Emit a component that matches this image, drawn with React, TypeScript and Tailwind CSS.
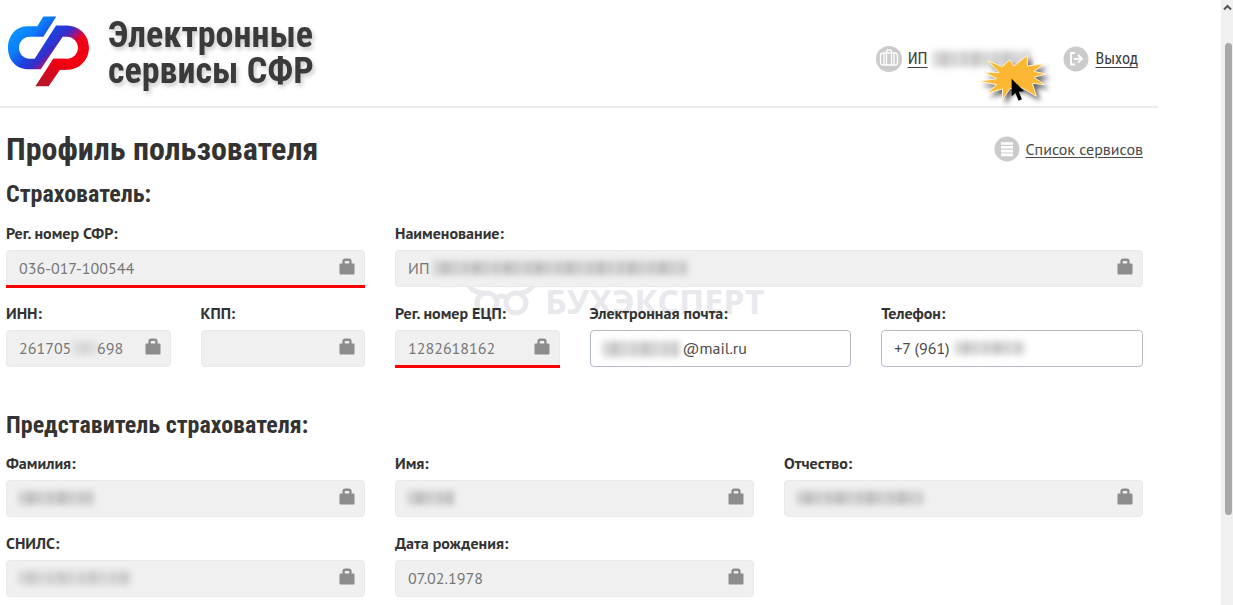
import { useId } from "react";
import type { ReactNode } from "react";

const Logo = () => (
  <svg viewBox="24 50 243 212" className="mb-[3px] h-[71px] w-[81px]" aria-hidden="true">
    <defs>
      <linearGradient id="logoMain" gradientUnits="userSpaceOnUse" x1="65" y1="65" x2="225" y2="225">
        <stop offset="0" stopColor="#0a96ff" />
        <stop offset="0.22" stopColor="#0d7cfa" />
        <stop offset="0.4" stopColor="#1c42df" />
        <stop offset="0.54" stopColor="#3a2cc8" />
        <stop offset="0.63" stopColor="#a8127c" />
        <stop offset="0.72" stopColor="#f20018" />
        <stop offset="1" stopColor="#f4000c" />
      </linearGradient>
      <linearGradient id="logoTail" gradientUnits="userSpaceOnUse" x1="170" y1="185" x2="125" y2="260">
        <stop offset="0" stopColor="#f00010" />
        <stop offset="1" stopColor="#b5162a" />
      </linearGradient>
    </defs>
    <path
      fill="url(#logoMain)"
      d="M130 51H169L130 112H90C46 114 46 176 90 178H104L168 78H200C289 82 289 207 200 211H140L160 178H200C245 176 245 114 200 112H188L122 209H80C5 205 5 84 80 80H112Z"
    />
    <path fill="url(#logoTail)" d="M160 178H200V211H180L146 260H106Z" />
  </svg>
);

const LockIcon = () => (
  <svg viewBox="0 0 16 17" className="h-[17px] w-4 shrink-0" aria-hidden="true">
    <path d="M4.600 6V3.200C4.600 2.200 5.200 1.700 6.200 1.700H9.800C10.800 1.700 11.400 2.200 11.400 3.200V6" fill="none" stroke="#8c8c8c" strokeWidth="2.400" />
    <rect x="0.500" y="5.500" width="15" height="11" rx="1" fill="#8c8c8c" />
  </svg>
);

const SuitcaseIcon = () => (
  <svg viewBox="0 0 26 26" className="size-[26px] shrink-0" aria-hidden="true">
    <circle cx="13" cy="13" r="13" fill="#cbcbcb" />
    <g fill="none" stroke="#fff" strokeWidth="1.3">
      <rect x="4.500" y="7" width="17" height="12" rx="2.500" />
      <path d="M8 7V19M18 7V19M10.500 19V5.500Q10.500 4 12 4H14Q15.500 4 15.500 5.500V19" />
    </g>
  </svg>
);

const ExitIcon = () => (
  <svg viewBox="0 0 26 26" className="size-[26px] shrink-0" aria-hidden="true">
    <circle cx="13" cy="13" r="12.500" fill="#cbcbcb" />
    <path d="M12 7H8V18.500H12M11 12.800H18M15 9L19 12.800L15 16.600" fill="none" stroke="#fff" strokeWidth="1.800" />
  </svg>
);

const ListIcon = () => (
  <svg viewBox="0 0 26 26" className="size-[26px] shrink-0" aria-hidden="true">
    <circle cx="13" cy="13" r="12.500" fill="#cbcbcb" />
    <path d="M7 7.500H19M7 11.300H19M7 15.100H19M7 18.900H19" stroke="#fff" strokeWidth="2.600" />
  </svg>
);

const ClickBurst = () => (
  <svg viewBox="0 0 240 186" className="absolute top-0.5 left-[98px] z-20 h-[62px] w-20 overflow-visible" aria-hidden="true">
    <path
      className="drop-shadow-[10px_12px_8px_rgba(0,0,0,0.6)]"
      d="M42 38L85 56L107 35L120 54L160 22L160 54L208 48L180 70L215 78L180 88L212 110L175 106L187 145L145 120L108 122L85 155L86 123L40 135L68 110L18 100L68 92L32 73L75 74Z"
      fill="#fdb833"
      stroke="#fff3d0"
      strokeWidth="3"
    />
    <path d="M113 92V145L124 135L134 158L144 154L134 131L150 130Z" fill="#000" />
  </svg>
);

const Watermark = () => (
  <div className="absolute top-14 left-[461px] flex items-center gap-2 text-[#e8e8ed]" aria-hidden="true">
    <svg viewBox="0 0 70 42" className="h-[42px] w-[70px]">
      <g fill="none" stroke="currentColor" strokeWidth="5">
        <circle cx="20" cy="23" r="10" />
        <circle cx="49" cy="23" r="10" />
        <path d="M1 5Q7 13 16 13M67 5Q61 13 52 13M29 18Q34 14 40 18" />
      </g>
    </svg>
    <span className="font-['Open_Sans',sans-serif] text-[34px] leading-[42px] font-bold">БУХЭКСПЕРТ</span>
  </div>
);

// Smeared strip that covers private data
const Smudge = ({ className }: { className: string }) => (
  <span
    aria-hidden="true"
    className={`pointer-events-none bg-[repeating-linear-gradient(93deg,#777_0px,#999_3px,#ccc_6px,#777_9px,#888_15px,#bbb_18px,#888_23px,#ddd_27px,#777_31px)] blur-[3px] ${className}`}
  />
);

type FieldProps = {
  label: string;
  span: string;
  value?: string;
  locked?: boolean;
  marked?: boolean;
  indent?: string;
  children?: ReactNode;
};

const Field = ({ label, span, value = "", locked = true, marked = false, indent = "pl-3", children }: FieldProps) => {
  const id = useId();
  const box = locked ? "border-[#e8e9eb] bg-[#f0f0f0] pr-[9px] text-[#777]" : "border-[#b4b9c6] bg-white text-[#4a4a4a]";

  return (
    <div className={span}>
      <label htmlFor={id} className="block text-base leading-[18px] font-bold whitespace-nowrap text-[#333]">
        {label}
      </label>
      <div className={`relative mt-2 flex h-[37px] items-center rounded border ${box}`}>
        <input
          id={id}
          type="text"
          defaultValue={value}
          readOnly={locked}
          className={`h-full w-full min-w-0 bg-transparent pb-0.5 text-base outline-none ${indent}`}
        />
        {locked && (
          <span className="mb-1">
            <LockIcon />
          </span>
        )}
        {children}
        {marked && <span className="absolute -inset-x-px -bottom-0.5 h-[3px] bg-[#ff0000]" />}
      </div>
    </div>
  );
};

const Header = () => (
  <header className="flex h-[108px] items-center justify-between border-b-2 border-[#ebebeb] pr-5 pl-2">
    <div className="flex items-center gap-[19px]">
      <Logo />
      <p className="font-['Roboto_Condensed','Roboto',sans-serif] text-[36px] leading-9 font-bold text-[#3a3a3a] drop-shadow-[2px_3px_2px_rgba(0,0,0,0.2)]">
        Электронные
        <br />
        сервисы СФР
      </p>
    </div>
    <nav className="flex items-center gap-8 pt-3 font-['Roboto_Condensed','Roboto',sans-serif] text-base text-[#3f3f3f]">
      <div className="relative flex items-center gap-1.5">
        <SuitcaseIcon />
        <a href="#profile" className="underline underline-offset-3">
          ИП
        </a>
        <Smudge className="h-4 w-[98px] opacity-45" />
        <ClickBurst />
      </div>
      <a href="#logout" className="flex items-center gap-1.5 underline underline-offset-3">
        <ExitIcon />
        Выход
      </a>
    </nav>
  </header>
);

const Scrollbar = () => (
  <aside className="flex w-3 shrink-0 flex-col items-center bg-[#f1f1f1]" aria-hidden="true">
    <svg viewBox="0 0 12 12" className="mt-px h-3 w-3">
      <path d="M3 8.500L6.500 5L10 8.500" fill="none" stroke="#555" strokeWidth="2" />
    </svg>
    <div className="mt-[30px] ml-0.5 h-[78%] w-[7px] rounded bg-[#a8a8a8]" />
  </aside>
);

export default function App() {
  return (
    <div className="flex h-screen overflow-hidden bg-white font-['PT_Sans','Noto_Sans',sans-serif]">
      <div className="min-w-0 flex-1 pr-[63px]">
        <Header />
        <main className="pr-[15px] pl-1.5">
          <div className="flex items-center justify-between pt-[18px]">
            <h1 className="font-['Roboto_Condensed','Roboto',sans-serif] text-[32px] leading-[46px] font-bold text-[#333]">
              Профиль пользователя
            </h1>
            <a href="#services" className="flex items-center gap-[5px] text-base text-[#4a4a4a] underline underline-offset-2">
              <ListIcon />
              Список сервисов
            </a>
          </div>

          <section className="relative isolate">
            <h2 className="font-['Roboto_Condensed','Roboto',sans-serif] text-2xl leading-[44px] font-bold text-[#333]">
              Страхователь:
            </h2>
            <div className="relative mt-2">
              <Watermark />
              <div className="relative grid grid-cols-12 gap-x-[30px] gap-y-[17px]">
                <Field label="Рег. номер СФР:" span="col-span-4" value="036-017-100544" marked />
                <Field label="Наименование:" span="col-span-8" value="ИП">
                  <Smudge className="absolute top-2.5 left-[38px] h-3.5 w-[254px] opacity-45" />
                </Field>
                <Field label="ИНН:" span="col-span-2" value="261705      698">
                  <Smudge className="absolute top-2.5 left-[66px] h-3.5 w-6 opacity-25" />
                </Field>
                <Field label="КПП:" span="col-span-2" />
                <Field label="Рег. номер ЕЦП:" span="col-span-2" value="1282618162" marked />
                <Field label="Электронная почта:" span="col-span-3" value="@mail.ru" locked={false} indent="pl-[92px]">
                  <Smudge className="absolute top-2.5 left-3 h-4 w-[76px] opacity-45" />
                </Field>
                <Field label="Телефон:" span="col-span-3" value="+7 (961)" locked={false}>
                  <Smudge className="absolute top-2.5 left-[73px] h-3.5 w-[70px] opacity-45" />
                </Field>
              </div>
            </div>
          </section>

          <section className="mt-9">
            <h2 className="font-['Roboto_Condensed','Roboto',sans-serif] text-2xl leading-[44px] font-bold text-[#333]">
              Представитель страхователя:
            </h2>
            <div className="mt-[7px] grid grid-cols-12 gap-x-[30px] gap-y-[17px]">
              <Field label="Фамилия:" span="col-span-4">
                <Smudge className="absolute top-2.5 left-3 h-3.5 w-[74px] opacity-45" />
              </Field>
              <Field label="Имя:" span="col-span-4">
                <Smudge className="absolute top-2.5 left-3 h-3.5 w-[46px] opacity-45" />
              </Field>
              <Field label="Отчество:" span="col-span-4">
                <Smudge className="absolute top-2.5 left-3 h-3.5 w-[126px] opacity-45" />
              </Field>
              <Field label="СНИЛС:" span="col-span-4">
                <Smudge className="absolute top-2.5 left-3 h-3.5 w-[112px] opacity-35" />
              </Field>
              <Field label="Дата рождения:" span="col-span-4" value="07.02.1978" />
            </div>
          </section>
        </main>
      </div>
      <Scrollbar />
    </div>
  );
}
